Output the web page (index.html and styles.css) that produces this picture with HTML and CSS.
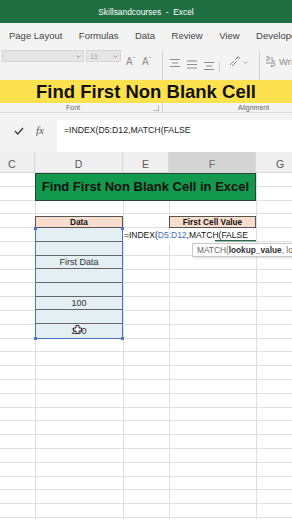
FILE: index.html
```html
<!DOCTYPE html>
<html lang="en">
<head>
  <meta charset="UTF-8">
  <title>Find First Non Blank Cell</title>
  <link rel="stylesheet" href="styles.css">
</head>
<body>

<div class="titlebar">Skillsandcourses&nbsp; -&nbsp; Excel</div>

<nav class="tabs">
  <span>Page Layout</span>
  <span>Formulas</span>
  <span>Data</span>
  <span>Review</span>
  <span>View</span>
  <span>Developer</span>
</nav>

<div class="ribbon">
  <div class="tools">
    <div class="combo font-name">
      <svg class="caret" width="5" height="3" viewBox="0 0 5 3"><polyline points="0.5,0.5 2.5,2.5 4.5,0.5"/></svg>
    </div>
    <div class="combo font-size">
      <span>11</span>
      <svg class="caret" width="5" height="3" viewBox="0 0 5 3"><polyline points="0.5,0.5 2.5,2.5 4.5,0.5"/></svg>
    </div>
    <span class="grow-btn first">A<small>ˆ</small></span>
    <span class="grow-btn">A<small>ˇ</small></span>
    <span class="sep long first-sep"></span>
    <svg class="align-icon a1" width="10" height="12" viewBox="0 0 10 12"><path d="M0 1.5h10M2 5h6M0 8.5h10"/></svg>
    <svg class="align-icon" width="10" height="12" viewBox="0 0 10 12"><path d="M0 3h10M0 6.5h10M0 10h10"/></svg>
    <svg class="align-icon" width="10" height="12" viewBox="0 0 10 12"><path d="M0 4.5h10M2 8h6M0 11.5h10"/></svg>
    <span class="sep short"></span>
    <svg class="orient-icon" width="12" height="11" viewBox="0 0 12 11"><path d="M1 9l4-4M3 10l5-5M6 4l3-3M8 1h2v2"/></svg>
    <svg class="caret small-caret" width="5" height="3" viewBox="0 0 5 3"><polyline points="0.5,0.5 2.5,2.5 4.5,0.5"/></svg>
    <span class="sep long last-sep"></span>
    <svg class="wrap-icon" width="12" height="11" viewBox="0 0 12 11"><path d="M1 1h3v3M1 4h3M7 1v4h3M1 7h8a2 2 0 0 1 0 3H6M7 9l-1 1 1 1"/></svg>
    <span class="wrap-text">Wrap Text</span>
  </div>

  <div class="banner">Find First Non Blank Cell</div>

  <div class="group-labels">
    <span class="font-label">Font</span>
    <span class="launcher"></span>
    <span class="sep label-sep"></span>
    <span class="align-label">Alignment</span>
  </div>
</div>

<div class="formula-row">
  <div class="fx-buttons">
    <svg class="check" width="10" height="8" viewBox="0 0 10 8"><polyline points="1,4 3.8,7 9,1"/></svg>
    <span class="fx">fx</span>
  </div>
  <div class="formula-input">=INDEX(D5:D12,MATCH(FALSE</div>
</div>

<div class="col-headers">
  <div class="col-head c">C</div>
  <div class="col-head">D</div>
  <div class="col-head">E</div>
  <div class="col-head active">F</div>
  <div class="col-head g">G</div>
</div>

<div class="sheet">
  <div class="title-cell">Find First Non Blank Cell in Excel</div>

  <div class="head-cell data-head">Data</div>
  <div class="head-cell result-head">First Cell Value</div>

  <div class="data-list">
    <div class="data-cell"></div>
    <div class="data-cell"></div>
    <div class="data-cell">First Data</div>
    <div class="data-cell"></div>
    <div class="data-cell"></div>
    <div class="data-cell">100</div>
    <div class="data-cell"></div>
    <div class="data-cell">200</div>
    <span class="handle tl"></span>
    <span class="handle tr"></span>
    <span class="handle bl"></span>
    <span class="handle br"></span>
  </div>

  <div class="edit-cell">=INDEX(<span class="ref">D5:D12</span>,MATCH(FALSE</div>

  <div class="tooltip">MATCH(<b>lookup_value</b>, lookup_array, [match_type])</div>

  <svg class="cursor" width="9" height="9" viewBox="0 0 9 9">
    <path d="M3 0.5h3v2.5h2.5v3h-2.5v2.5h-3v-2.5h-2.5v-3h2.5z"/>
  </svg>
</div>

</body>
</html>
```

FILE: styles.css
```css
* {
  box-sizing: border-box;
  margin: 0;
  padding: 0;
}
body {
  width: 292px;
  height: 520px;
  overflow: hidden;
  background: #fff;
  font-family: 'Liberation Sans', Arial, sans-serif;
}

/* window title */
.titlebar {
  height: 23px;
  background: #1f6f43;
  color: #fff;
  font-size: 8.4px;
  display: flex;
  align-items: center;
  justify-content: center;
}

/* ribbon tabs */
.tabs {
  height: 25px;
  background: #f3f3f3;
  display: flex;
  align-items: center;
  gap: 16.5px;
  padding-left: 9px;
  font-size: 9.5px;
  color: #444;
  white-space: nowrap;
  overflow: hidden;
}

.ribbon {
  height: 65px;
  background: #f3f3f3;
  border-bottom: 1px solid #dadada;
}
.tools {
  height: 32px;
  padding-top: 2px;
  display: flex;
  align-items: flex-start;
  white-space: nowrap;
  overflow: hidden;
}
.combo {
  flex: none;
  height: 12px;
  background: #e5e5e5;
  border: 1px solid #d6d6d6;
  display: flex;
  align-items: center;
  justify-content: flex-end;
  padding-right: 2px;
  font-size: 8px;
  color: #a8a8a8;
}
.font-name {
  width: 82px;
  margin-left: 2px;
}
.font-size {
  width: 35px;
  margin-left: 2px;
  justify-content: space-between;
  padding-left: 3px;
}
.caret {
  fill: none;
  stroke: #a0a0a0;
  stroke-width: 1;
}
.grow-btn {
  flex: none;
  width: 11px;
  margin-left: 5px;
  margin-top: 6px;
  font-size: 10px;
  color: #8a8a8a;
}
.grow-btn small {
  font-size: 7px;
  vertical-align: 3px;
}
.sep {
  flex: none;
  width: 1px;
  background: #d2d2d2;
}
.sep.long {
  height: 30px;
}
.first-sep {
  margin-left: 9px;
}
.sep.short {
  height: 11px;
  margin-left: 5px;
  margin-top: 11px;
}
.last-sep {
  margin-left: 11px;
}
.align-icon {
  flex: none;
  margin-left: 7px;
  margin-top: 8px;
  fill: none;
  stroke: #8c8c8c;
  stroke-width: 1;
}
.orient-icon {
  flex: none;
  margin-left: 9px;
  margin-top: 6px;
  fill: none;
  stroke: #8c8c8c;
  stroke-width: 1;
}
.small-caret {
  flex: none;
  margin-left: 2px;
  margin-top: 11px;
}
.wrap-icon {
  flex: none;
  margin-left: 5px;
  margin-top: 6px;
  fill: none;
  stroke: #8c8c8c;
  stroke-width: 1;
}
.wrap-text {
  margin-left: 2px;
  margin-top: 6px;
  font-size: 9.5px;
  color: #8c8c8c;
}

.banner {
  height: 23px;
  background: #fde14f;
  color: #111;
  font-size: 18.5px;
  font-weight: bold;
  line-height: 23px;
  text-align: center;
  white-space: nowrap;
}

.group-labels {
  height: 9px;
  display: flex;
  align-items: center;
  font-size: 7px;
  color: #666;
  white-space: nowrap;
}
.font-label {
  width: 14px;
  margin-left: 66px;
}
.launcher {
  width: 6px;
  height: 6px;
  margin-left: 73px;
  border: 1px solid #b5b5b5;
  border-top-color: transparent;
  border-left-color: transparent;
}
.label-sep {
  height: 9px;
  margin-left: 3px;
}
.align-label {
  margin-left: 75px;
}

/* formula bar */
.formula-row {
  height: 39px;
  padding-top: 7px;
  background: #f3f3f3;
  display: flex;
}
.fx-buttons {
  width: 57px;
  display: flex;
  align-items: flex-start;
  padding-top: 6px;
}
.check {
  margin-left: 14px;
  margin-top: 1px;
  fill: none;
  stroke: #3a3a3a;
  stroke-width: 1.3;
}
.fx {
  margin-left: 12px;
  margin-top: -2px;
  font-family: 'Liberation Serif', serif;
  font-style: italic;
  font-size: 11px;
  color: #555;
}
.formula-input {
  flex: 1;
  background: #fff;
  padding: 5px 0 0 7px;
  font-size: 8.7px;
  color: #222;
  white-space: nowrap;
}

/* column letters */
.col-headers {
  height: 21px;
  background: #efefef;
  display: grid;
  grid-template-columns: 35px 88px 46px 87px 1fr;
  border-bottom: 1px solid #d8d8d8;
}
.col-head {
  display: flex;
  align-items: flex-end;
  justify-content: center;
  padding-bottom: 2px;
  font-size: 10.5px;
  color: #5a5a5a;
  border-right: 1px solid #d8d8d8;
}
.col-head.c {
  justify-content: flex-start;
  padding-left: 8px;
}
.col-head.g {
  justify-content: flex-start;
  padding-left: 20px;
  border-right: none;
}
.col-head.active {
  background: #d4d4d4;
  color: #6b6b6b;
}

/* worksheet */
.sheet {
  position: relative;
  height: 346px;
  display: grid;
  grid-template-columns: 35px 88px 46px 87px 1fr;
  grid-template-rows: repeat(26, 13.8px);
  background-image:
    linear-gradient(to right, transparent 35px, #e0e0e0 35px 36px, transparent 36px 123px, #e0e0e0 123px 124px, transparent 124px 169px, #e0e0e0 169px 170px, transparent 170px 256px, #e0e0e0 256px 257px, transparent 257px),
    repeating-linear-gradient(to bottom, transparent 0 12.8px, #e0e0e0 12.8px 13.8px);
}
.title-cell {
  grid-column: 2 / 5;
  grid-row: 1 / 3;
  background: #12994d;
  border: 1px solid #2c4436;
  display: flex;
  align-items: center;
  justify-content: center;
  font-size: 13px;
  font-weight: bold;
  color: #111;
  white-space: nowrap;
}
.head-cell {
  grid-row: 4;
  margin-top: 1.5px;
  background: #f9ddcc;
  border: 1px solid #555;
  display: flex;
  align-items: center;
  justify-content: center;
  font-size: 8.3px;
  font-weight: bold;
  color: #111;
}
.data-head {
  grid-column: 2;
}
.result-head {
  grid-column: 4;
}
.data-list {
  grid-column: 2;
  grid-row: 5 / span 8;
  position: relative;
  display: grid;
  grid-template-rows: repeat(8, 1fr);
  background: #e4eff3;
  border-left: 1px solid #4a76c4;
  border-right: 1px solid #4a76c4;
  border-bottom: 1px solid #4a76c4;
}
.data-cell {
  display: flex;
  align-items: center;
  justify-content: center;
  font-size: 9px;
  color: #333;
  border-bottom: 1px solid #666;
}
.data-cell:nth-child(8) {
  border-bottom: none;
}
.handle {
  position: absolute;
  width: 3px;
  height: 3px;
  background: #4a76c4;
}
.handle.tl { left: -2px; top: -1px; }
.handle.tr { right: -2px; top: -1px; }
.handle.bl { left: -2px; bottom: -2px; }
.handle.br { right: -2px; bottom: -2px; }

.edit-cell {
  grid-column: 3 / 5;
  grid-row: 5;
  background: linear-gradient(#2d6a4b, #2d6a4b) right bottom / 41px 1.5px no-repeat, #fff;
  display: flex;
  align-items: center;
  padding-left: 1px;
  font-size: 8.5px;
  color: #111;
  white-space: nowrap;
}
.edit-cell .ref {
  color: #3d6fc2;
}

.tooltip {
  position: absolute;
  left: 192px;
  top: 70px;
  height: 14px;
  padding: 0 4px;
  background: #fff;
  border: 1px solid #c8c8c8;
  box-shadow: 1px 1px 2px rgba(0,0,0,0.15);
  display: flex;
  align-items: center;
  font-size: 8.3px;
  color: #666;
  white-space: nowrap;
}
.tooltip b {
  color: #333;
}

.cursor {
  position: absolute;
  left: 73px;
  top: 152px;
  fill: #fff;
  stroke: #222;
  stroke-width: 1;
}
```
